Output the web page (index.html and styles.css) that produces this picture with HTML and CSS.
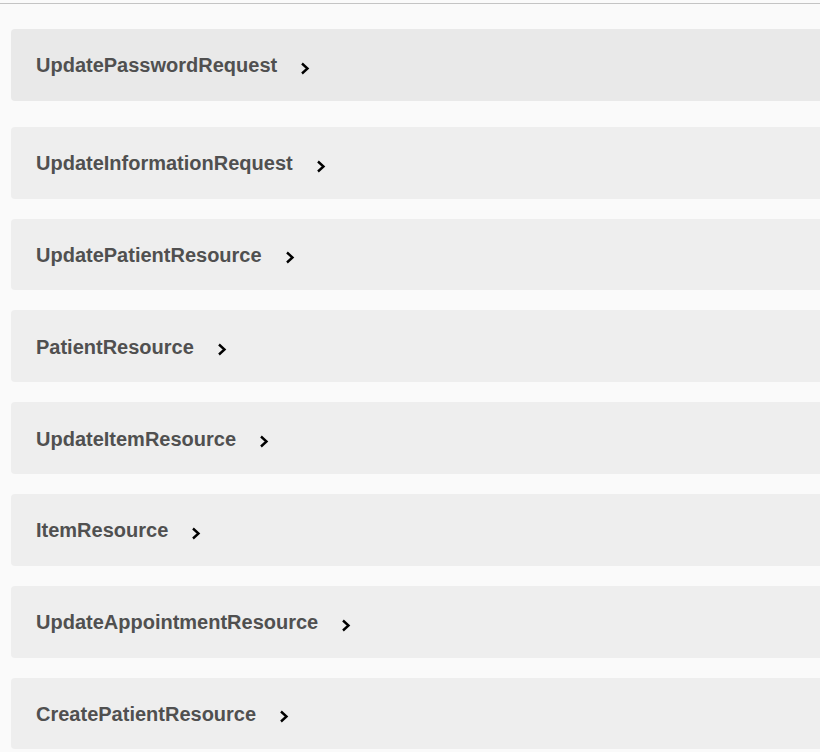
FILE: index.html
```html
<!DOCTYPE html>
<html>
<head>
<meta charset="utf-8">
<link rel="stylesheet" href="styles.css">
</head>
<body>
<div class="topline"></div>
<div class="models">
  <div class="model hover"><span class="title">UpdatePasswordRequest</span><svg class="chev" viewBox="0 0 10 13" width="10" height="13"><path d="M2 1.5 L7.5 6.5 L2 11.5" fill="none" stroke="#000" stroke-width="2.4"/></svg></div>
  <div class="model second"><span class="title">UpdateInformationRequest</span><svg class="chev" viewBox="0 0 10 13" width="10" height="13"><path d="M2 1.5 L7.5 6.5 L2 11.5" fill="none" stroke="#000" stroke-width="2.4"/></svg></div>
  <div class="model"><span class="title">UpdatePatientResource</span><svg class="chev" viewBox="0 0 10 13" width="10" height="13"><path d="M2 1.5 L7.5 6.5 L2 11.5" fill="none" stroke="#000" stroke-width="2.4"/></svg></div>
  <div class="model"><span class="title">PatientResource</span><svg class="chev" viewBox="0 0 10 13" width="10" height="13"><path d="M2 1.5 L7.5 6.5 L2 11.5" fill="none" stroke="#000" stroke-width="2.4"/></svg></div>
  <div class="model"><span class="title">UpdateItemResource</span><svg class="chev" viewBox="0 0 10 13" width="10" height="13"><path d="M2 1.5 L7.5 6.5 L2 11.5" fill="none" stroke="#000" stroke-width="2.4"/></svg></div>
  <div class="model"><span class="title">ItemResource</span><svg class="chev" viewBox="0 0 10 13" width="10" height="13"><path d="M2 1.5 L7.5 6.5 L2 11.5" fill="none" stroke="#000" stroke-width="2.4"/></svg></div>
  <div class="model"><span class="title">UpdateAppointmentResource</span><svg class="chev" viewBox="0 0 10 13" width="10" height="13"><path d="M2 1.5 L7.5 6.5 L2 11.5" fill="none" stroke="#000" stroke-width="2.4"/></svg></div>
  <div class="model"><span class="title">CreatePatientResource</span><svg class="chev" viewBox="0 0 10 13" width="10" height="13"><path d="M2 1.5 L7.5 6.5 L2 11.5" fill="none" stroke="#000" stroke-width="2.4"/></svg></div>
</div>
</body>
</html>
```
FILE: styles.css
```css
html, body {
  margin: 0;
  padding: 0;
  background: #fafafa;
  overflow: hidden;
  width: 820px;
  height: 752px;
}
.topline {
  height: 3px;
  border-bottom: 1px solid #c4c4c4;
}
.models {
  display: flex;
  flex-direction: column;
  gap: 20px;
  padding: 25px 0 0 11px;
  margin-right: -20px;
}
.model {
  height: 71.8px;
  flex: none;
  background: #eeeeee;
  border-radius: 4px;
  display: flex;
  align-items: center;
  padding-left: 25px;
}
.model.hover {
  background: #e9e9e9;
}
.model.second {
  margin-top: 6px;
}
.title {
  font-family: "Liberation Sans", Arial, sans-serif;
  font-weight: bold;
  font-size: 20px;
  color: #505050;
  margin-top: 2px;
}
.chev {
  margin-left: 23px;
  margin-top: 7px;
}
```
